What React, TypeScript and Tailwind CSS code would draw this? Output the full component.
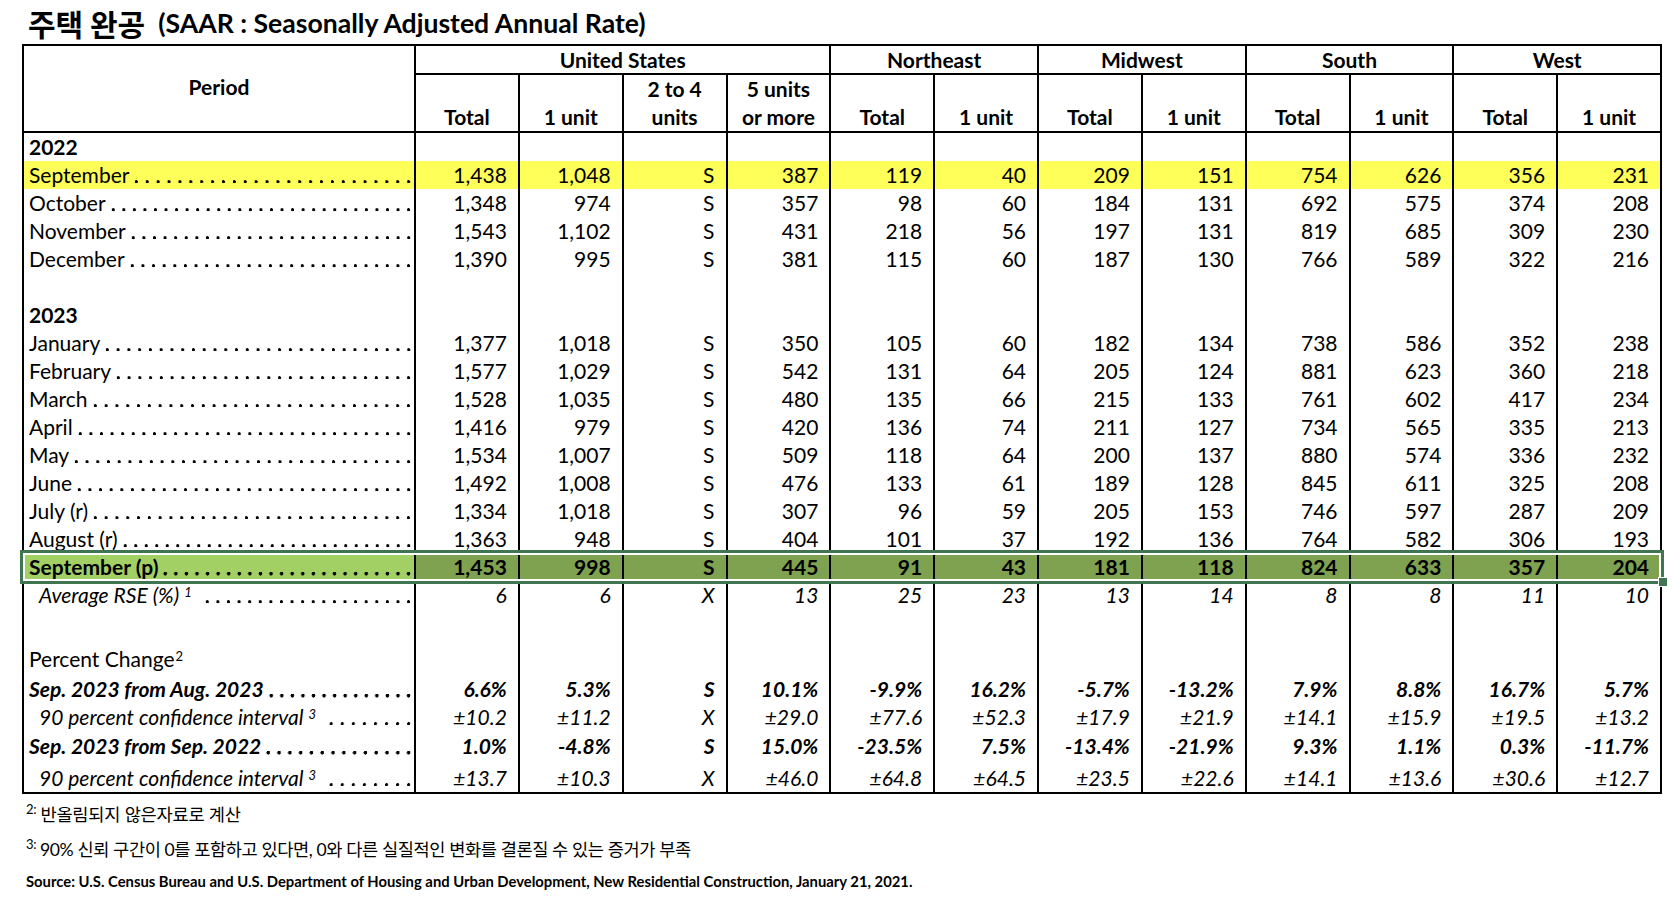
// @ts-nocheck
import React from 'react'

const GRID = 'grid grid-cols-[390px_repeat(12,minmax(0,1fr))]'

const GROUPS = [
  { name: 'United States', span: 'col-span-4' },
  { name: 'Northeast', span: 'col-span-2' },
  { name: 'Midwest', span: 'col-span-2' },
  { name: 'South', span: 'col-span-2' },
  { name: 'West', span: 'col-span-2' },
]

const SUBS = [
  ['', 'Total'],
  ['', '1 unit'],
  ['2 to 4', 'units'],
  ['5 units', 'or more'],
  ['', 'Total'],
  ['', '1 unit'],
  ['', 'Total'],
  ['', '1 unit'],
  ['', 'Total'],
  ['', '1 unit'],
  ['', 'Total'],
  ['', '1 unit'],
]

const v = (s) => s.split(' ')

const ROWS = [
  { label: '2022', cls: 'font-bold', dots: false },
  { label: 'September', vals: v('1,438 1,048 S 387 119 40 209 151 754 626 356 231'), bg: 'yellow' },
  { label: 'October', vals: v('1,348 974 S 357 98 60 184 131 692 575 374 208') },
  { label: 'November', vals: v('1,543 1,102 S 431 218 56 197 131 819 685 309 230') },
  { label: 'December', vals: v('1,390 995 S 381 115 60 187 130 766 589 322 216') },
  { label: '', dots: false },
  { label: '2023', cls: 'font-bold', dots: false },
  { label: 'January', vals: v('1,377 1,018 S 350 105 60 182 134 738 586 352 238') },
  { label: 'February', vals: v('1,577 1,029 S 542 131 64 205 124 881 623 360 218') },
  { label: 'March', vals: v('1,528 1,035 S 480 135 66 215 133 761 602 417 234') },
  { label: 'April', vals: v('1,416 979 S 420 136 74 211 127 734 565 335 213') },
  { label: 'May', vals: v('1,534 1,007 S 509 118 64 200 137 880 574 336 232') },
  { label: 'June', vals: v('1,492 1,008 S 476 133 61 189 128 845 611 325 208') },
  { label: 'July (r)', vals: v('1,334 1,018 S 307 96 59 205 153 746 597 287 209') },
  { label: 'August (r)', vals: v('1,363 948 S 404 101 37 192 136 764 582 306 193') },
  { label: 'September (p)', vals: v('1,453 998 S 445 91 43 181 118 824 633 357 204'), cls: 'font-bold', bold: true, bg: 'green' },
  { label: 'Average RSE (%)', sup: '1', indent: true, cls: 'italic', vals: v('6 6 X 13 25 23 13 14 8 8 11 10') },
  { label: 'Percent Change', sup: '2', tight: true, dots: false, h: 'h-[64px]' },
  {
    label: 'Sep. 2023 from Aug. 2023',
    cls: 'font-bold italic',
    bold: true,
    h: 'h-[30px]',
    vals: v('6.6% 5.3% S 10.1% -9.9% 16.2% -5.7% -13.2% 7.9% 8.8% 16.7% 5.7%'),
  },
  {
    label: '90 percent confidence interval',
    sup: '3',
    indent: true,
    cls: 'italic',
    h: 'h-[27px]',
    vals: v('±10.2 ±11.2 X ±29.0 ±77.6 ±52.3 ±17.9 ±21.9 ±14.1 ±15.9 ±19.5 ±13.2'),
  },
  {
    label: 'Sep. 2023 from Sep. 2022',
    cls: 'font-bold italic',
    bold: true,
    h: 'h-[30px]',
    vals: v('1.0% -4.8% S 15.0% -23.5% 7.5% -13.4% -21.9% 9.3% 1.1% 0.3% -11.7%'),
  },
  {
    label: '90 percent confidence interval',
    sup: '3',
    indent: true,
    cls: 'italic',
    h: 'h-[32px]',
    vals: v('±13.7 ±10.3 X ±46.0 ±64.8 ±64.5 ±23.5 ±22.6 ±14.1 ±13.6 ±30.6 ±12.7'),
  },
]

function BodyRow({ row }) {
  const labelBg = row.bg === 'yellow' ? 'bg-[#ffff59]' : row.bg === 'green' ? 'bg-[#a3d065]' : ''
  const cellBg = row.bg === 'yellow' ? 'bg-[#ffff59]' : row.bg === 'green' ? 'bg-[#7ea24f]' : ''
  const vals = row.vals || Array(12).fill('')
  // leader dots drawn as a repeating background
  const dotImg = row.bold
    ? 'bg-[radial-gradient(circle_at_50%_74%,#000_1.6px,transparent_2.1px)]'
    : 'bg-[radial-gradient(circle_at_50%_74%,#000_1.3px,transparent_1.8px)]'
  return (
    <div className={`${GRID} ${row.h || 'h-[28px]'} ${row.cls || ''}`}>
      <div
        className={`flex min-w-0 items-end whitespace-nowrap leading-[28px] ${
          row.indent ? 'pl-[15px]' : 'pl-[5px]'
        } ${labelBg}`}
      >
        <span className="shrink-0">
          {row.label}
          {row.sup && (
            <sup className={`${row.tight ? 'ml-[1px]' : 'ml-[5px]'} text-[13px]`}>{row.sup}</sup>
          )}
        </span>
        {row.dots !== false && (
          <span
            className={`${row.sup ? 'ml-[10px]' : 'ml-[2px]'} h-[28px] min-w-0 flex-1 ${dotImg} bg-[length:10.5px_28px] bg-repeat-space`}
          />
        )}
      </div>
      {vals.map((val, i) => (
        <div
          key={i}
          className={`flex items-end justify-end border-l-2 border-black pr-[11px] leading-[28px] ${cellBg}`}
        >
          {val}
        </div>
      ))}
    </div>
  )
}

export default function App() {
  return (
    <div className="min-h-screen bg-white pl-[22px] font-['Lato','Noto_Sans_CJK_KR',sans-serif] text-black">
      <div className="flex h-[44px] items-center pl-[6px] pt-[3px] font-bold">
        <span className="text-[30px] font-['Noto_Sans_CJK_KR',sans-serif]">주택 완공</span>
        <span className="ml-[13px] text-[26.6px]">(SAAR : Seasonally Adjusted Annual Rate)</span>
      </div>

      <div className="relative w-[1640px] border-2 border-black text-[21px]">
        <div className={`${GRID} grid-rows-[29px_56px] border-b-2 border-black font-bold`}>
          <div className="row-span-2 flex items-center justify-center pb-[4px]">Period</div>
          {GROUPS.map((g) => (
            <div
              key={g.name}
              className={`${g.span} flex items-center justify-center border-b-2 border-l-2 border-black pt-[1px]`}
            >
              {g.name}
            </div>
          ))}
          {SUBS.map((s, i) => (
            <div
              key={i}
              className="flex flex-col items-center justify-end border-l-2 border-black leading-[28px]"
            >
              {s[0] && <span>{s[0]}</span>}
              <span>{s[1]}</span>
            </div>
          ))}
        </div>

        {ROWS.map((r, i) => (
          <BodyRow key={i} row={r} />
        ))}

        {/* selected range outline */}
        <div className="pointer-events-none absolute left-[-4px] top-[504px] h-[34px] w-[1644px] border-[3px] border-[#3f7550] shadow-[inset_0_0_0_2px_white]">
          <div className="absolute bottom-[-6px] right-[-7px] h-[10px] w-[10px] border border-white bg-[#3f7550]" />
        </div>
      </div>

      <div className="pl-[4px] pt-[9px]">
        <div className="flex h-[24px] items-center text-[17.6px] tracking-[-0.2px]">
          <sup className="mr-[4px] text-[13px]">2:</sup>
          <span>반올림되지 않은자료로 계산</span>
        </div>
        <div className="mt-[11px] flex h-[24px] items-center text-[17.6px] tracking-[-0.4px]">
          <sup className="mr-[4px] text-[13px]">3:</sup>
          <span>90% 신뢰 구간이 0를 포함하고 있다면, 0와 다른 실질적인 변화를 결론질 수 있는 증거가 부족</span>
        </div>
        <div className="mt-[9px] flex h-[20px] items-center text-[14.8px] font-bold">
          Source: U.S. Census Bureau and U.S. Department of Housing and Urban Development, New Residential
          Construction, January 21, 2021.
        </div>
      </div>
    </div>
  )
}
